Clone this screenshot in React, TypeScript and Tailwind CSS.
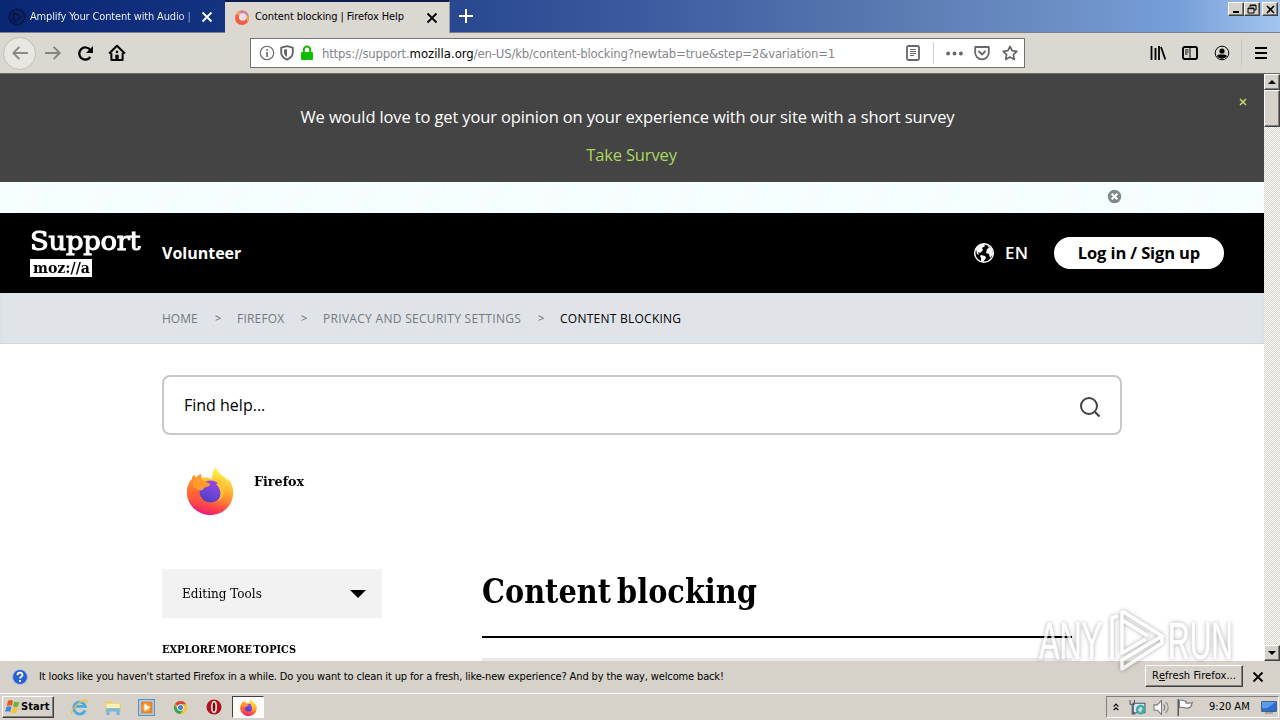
import type { ReactNode } from "react";

const ui = "font-['DejaVu_Sans_Condensed','DejaVu_Sans',sans-serif] [font-stretch:condensed]";
const slab = "font-['DejaVu_Serif_Condensed','DejaVu_Serif',serif] [font-stretch:condensed]";
const raised =
  "bg-[#d6d2ca] border border-t-white border-l-white border-r-[#404040] border-b-[#404040] shadow-[inset_-1px_-1px_0_#808080]";

function Svg({ size = 16, className = "", box = "0 0 16 16", children }: { size?: number; className?: string; box?: string; children: ReactNode }) {
  return (
    <svg width={size} height={size} viewBox={box} className={`shrink-0 ${className}`} fill="none">
      {children}
    </svg>
  );
}

function Cross({ className = "" }: { className?: string }) {
  return (
    <Svg size={12} box="0 0 12 12" className={className}>
      <path d="M1.5 1.5l9 9M10.5 1.5l-9 9" stroke="currentColor" strokeWidth="1.8" />
    </Svg>
  );
}

function FirefoxLogo({ size, className = "" }: { size: number; className?: string }) {
  return (
    <Svg size={size} box="0 0 48 48" className={className}>
      <defs>
        <linearGradient id="fxBody" x1="34" y1="4" x2="20" y2="48" gradientUnits="userSpaceOnUse">
          <stop offset="0" stopColor="#fff04a" />
          <stop offset=".35" stopColor="#ffb82e" />
          <stop offset=".62" stopColor="#ff7a35" />
          <stop offset=".82" stopColor="#ff3f4c" />
          <stop offset="1" stopColor="#e8207c" />
        </linearGradient>
        <linearGradient id="fxGlobe" x1="30" y1="13" x2="20" y2="34" gradientUnits="userSpaceOnUse">
          <stop offset="0" stopColor="#a544e0" />
          <stop offset=".5" stopColor="#7445de" />
          <stop offset="1" stopColor="#5540c0" />
        </linearGradient>
        <linearGradient id="fxSide" x1="4" y1="12" x2="14" y2="42" gradientUnits="userSpaceOnUse">
          <stop offset="0" stopColor="#ff9424" />
          <stop offset=".5" stopColor="#ff5f35" />
          <stop offset="1" stopColor="#ff4050" stopOpacity="0" />
        </linearGradient>
      </defs>
      <path d="M30 0c1 5 5 7 8 10 2 1 3 3 4 5 0-2-1-4-2-5 5 4 8 11 7 18-1 12-11 20-23 20S1 38 1 26c0-6 2-11 5-14 0-2 1-3 2-4l2 3c1-2 3-3 5-4v4c3-1 7-1 11 1 0-5 1-9 4-12z" fill="url(#fxBody)" />
      <path d="M6 12c0-2 1-3 2-4l2 3c1-2 3-3 5-4v5l-1 14c1 8 6 12 12 12-4 8-25 2-25-12 0-6 2-11 5-14z" fill="url(#fxSide)" />
      <circle cx="24.500" cy="24.500" r="11" fill="url(#fxGlobe)" />
      <path d="M25 12c4-1 8 1 10 5-2-1-4-1-5 0 5 5 6 12 2 17 7-4 9-14 3-20-3-3-7-3-10-2z" fill="#ffc136" />
      <path d="M7 14l4-3 4-2 1 4c3 2 6 2 8 4 1 2-4 3-6 4-1 2-3 3-6 2l-5-3z" fill="#ff9a2e" />
    </Svg>
  );
}

function Tabs() {
  return (
    <div className={`flex h-[33px] items-start border-b border-[#7d7f86] bg-[linear-gradient(90deg,#0a2774_0%,#12317f_16%,#27478f_35%,#3c5a9f_50%,#5877b0_68%,#6c8fc6_83%,#769fd9_92%,#a3c5ee_100%)] ${ui} text-[11px]`}>
      <div className="flex h-[33px] w-[225px] items-center pl-2 text-white">
        <Svg size={18}>
          <circle cx="8" cy="8" r="7" stroke="#06164a" strokeWidth="1.3" fill="#0b2263" />
          <path d="M5.5 4v8l6-4zM4 5v6" stroke="#06164a" />
        </Svg>
        <span className="ml-1 w-[163px] whitespace-nowrap bg-[linear-gradient(90deg,#fff_90%,#8ea0ca)] bg-clip-text pt-px tracking-[-0.16px] text-transparent">Amplify Your Content with Audio |</span>
        <Cross className="ml-2" />
      </div>
      <div className="flex h-[33px] w-[225px] shrink-0 items-center border-r border-t-2 border-r-[#9a9a9a] border-t-[#0b1c55] bg-[#dbd8d2] pl-[9px] text-black">
        <Svg>
          <circle cx="8" cy="8" r="7" fill="#f65a45" />
          <path d="M2 4a7 7 0 0 1 12-1c2 3 1 7-1 9 0-5-3-7-7-6z" fill="#f9a05a" />
          <path d="M5 1.7A7 7 0 0 1 14.8 8c-1-3-3-5-6-5z" fill="#9a7af0" />
          <circle cx="8.7" cy="7" r="3.8" fill="#e9ddec" />
        </Svg>
        <span className="ml-[5px] w-[171px] whitespace-nowrap tracking-[-0.1px]">Content blocking | Firefox Help</span>
        <Cross />
      </div>
      <Svg size={16} className="ml-[8px] mt-2">
        <path d="M8 1v14M1 8h14" stroke="white" strokeWidth="2" />
      </Svg>
      <div className="ml-auto mr-[2px] mt-[2px] flex">
        <div className={`flex h-[14px] w-4 items-end justify-center pb-[2px] ${raised}`}><div className="h-[2px] w-[6px] bg-black" /></div>
        <div className={`flex h-[14px] w-4 items-center justify-center ${raised}`}>
          <Svg size={10} box="0 0 10 10"><path d="M3 3V1h6v5H7M3 1.7h6M1 4h6v5H1zM1 4.7h6" stroke="black" /></Svg>
        </div>
        <div className={`ml-[2px] flex h-[14px] w-4 items-center justify-center ${raised}`}>
          <Svg size={9} box="0 0 9 9"><path d="M1 1l7 7M8 1L1 8" stroke="black" strokeWidth="1.6" /></Svg>
        </div>
      </div>
    </div>
  );
}

function NavBar() {
  return (
    <div className="flex h-[41px] items-center border-b border-[#6b6962] bg-[#dbd8d2]">
      <div className="ml-[3px] flex h-[33px] w-[33px] items-center justify-center rounded-full border border-[#c2bfb9] bg-[#e9e7e2]">
        <Svg size={18}><path d="M15 8H2M7.5 2.5L2 8l5.5 5.5" stroke="#8b8984" strokeWidth="1.7" /></Svg>
      </div>
      <Svg size={18} className="ml-[8px]"><path d="M1 8h13M8.500 2.500L14 8l-5.500 5.500" stroke="#85837e" strokeWidth="1.7" /></Svg>
      <Svg size={17} className="ml-[15px]">
        <path d="M12.500 11.300A5.700 5.700 0 1 1 12.400 4.600" stroke="black" strokeWidth="2.100" />
        <path d="M15 1v6.500H8.500z" fill="black" />
      </Svg>
      <Svg size={18} className="ml-[14px]">
        <path d="M1 8.500L8 1.600l7 6.900M3 8v6.300h10V8" stroke="black" strokeWidth="1.800" strokeLinejoin="round" />
        <path d="M6.500 14V9.500h3V14z" fill="black" /><path d="M7 6h2v2H7z" fill="black" />
      </Svg>
      <div className="ml-[124px] flex h-[30px] w-[775px] items-center border border-[#74736f] bg-white pl-[8px] text-[#66666a]">
        <Svg><circle cx="8" cy="8" r="6.700" stroke="currentColor" strokeWidth="1.100" /><path d="M8 7v5M8 4v1.700" stroke="currentColor" strokeWidth="1.600" /></Svg>
        <Svg className="ml-1"><path d="M8 1.200l5.800 1.400v4.900c0 3.500-3 6-5.800 7.200-2.800-1.200-5.800-3.700-5.800-7.200V2.600z" stroke="currentColor" strokeWidth="1.900" strokeLinejoin="round" /><path d="M8 4v8C6 10.500 5 9.500 5 7.500V4.700z" fill="currentColor" /></Svg>
        <Svg className="ml-1"><path d="M4.800 8V4.800a3.200 3.200 0 0 1 6.400 0V8" stroke="#12bc00" strokeWidth="2" /><rect x="2" y="7" width="12" height="8" rx="1" fill="#12bc00" /></Svg>
        <span className={`ml-[7px] w-[581px] whitespace-nowrap pt-px ${ui} text-[13px] font-extralight tracking-[-0.19px] text-[#85858a]`}>
          https://support.<span className="font-normal tracking-[-0.02px] text-black">mozilla.org</span>/en-US/kb/content-blocking?newtab=true&amp;step=2&amp;variation=1
        </span>
        <Svg className="ml-[2px]"><rect x="2" y="1" width="12" height="14" rx="1.500" stroke="currentColor" strokeWidth="1.800" /><path d="M5 4.500h6M5 6.500h6M5 8.500h6M5 10.500h4" stroke="currentColor" /></Svg>
        <div className="ml-[12px] h-[22px] w-px bg-[#d0d0d0]" />
        <Svg className="ml-3" size={17}><circle cx="2" cy="8" r="1.800" fill="currentColor" /><circle cx="8" cy="8" r="1.800" fill="currentColor" /><circle cx="14" cy="8" r="1.800" fill="currentColor" /></Svg>
        <Svg className="ml-[11px]"><path d="M1.200 2h13.600v5.500a6.800 6.800 0 0 1-13.600 0z" stroke="currentColor" strokeWidth="1.800" strokeLinejoin="round" /><path d="M4.500 6L8 9.400 11.500 6" stroke="currentColor" strokeWidth="1.800" /></Svg>
        <Svg className="ml-3"><path d="M8 1.300l2.100 4.400 4.700.6-3.400 3.300.9 4.800L8 12l-4.300 2.400.9-4.800L1.200 6.300l4.700-.6z" stroke="currentColor" strokeWidth="1.700" strokeLinejoin="round" /></Svg>
      </div>
      <Svg className="ml-[125px]"><path d="M1.500 1v14M5.500 3v12M9 1v14M11 2l4.300 12.500" stroke="black" strokeWidth="1.800" /></Svg>
      <Svg className="ml-4"><rect x="1" y="2" width="14" height="12" rx="1.700" stroke="black" strokeWidth="1.900" /><path d="M8 2v12M3 5h3.500M3 7h3.500M3 9h2.500" stroke="black" /></Svg>
      <Svg className="ml-4"><circle cx="8" cy="8" r="6.800" stroke="black" /><circle cx="8" cy="6" r="2.600" fill="black" /><path d="M3 11c1-2 2.500-1.500 5-1.500s4 0 5 1.500c-2.500 3.700-7.500 3.700-10 0z" fill="black" /></Svg>
      <div className="ml-[11px] h-7 w-px bg-[#c9c6c0]" />
      <Svg className="ml-[11px]"><path d="M2 3h12M2 8h12M2 13h12" stroke="black" strokeWidth="2" /></Svg>
    </div>
  );
}

function Globe() {
  return (
    <Svg size={22} box="0 0 22 22">
      <circle cx="11" cy="11" r="9.300" stroke="white" strokeWidth="1.500" />
      <path d="M3 7c2-3 4-5 8-5l1 2-3 2 1 2-3 3-2-1 1 3-2-1zM8 13l4 1 1 2-3 4-2-1v-3l-1-2zM14 3l5 4 1 5-3 4-1-4-3-1 1-4 2-1z" fill="white" />
    </Svg>
  );
}

function Crumbs() {
  const sep = <span className="w-[38px] pl-4 text-[11px] tracking-normal text-[#606468]">&gt;</span>;
  return (
    <div className="flex h-[51px] shrink-0 items-center whitespace-nowrap border-b border-[#d3d8de] bg-[linear-gradient(90deg,#dbe0e5,#e0e4e8_4px,#e0e4e8_1260px,#dbe0e5)] pl-[162px] pt-px font-['Open_Sans',sans-serif] text-[12px] text-[#75797d]">
      <span className="w-[37px]">HOME</span>{sep}
      <span className="w-12 tracking-[0.2px]">FIREFOX</span>{sep}
      <span className="w-[199px] tracking-[0.3px]">PRIVACY AND SECURITY SETTINGS</span>{sep}
      <span className="tracking-[0.25px] text-black">CONTENT BLOCKING</span>
    </div>
  );
}

function Page() {
  return (
    <div className="flex min-w-0 flex-1 flex-col overflow-hidden bg-white">
      <div className="flex h-[108px] shrink-0 justify-between bg-[#444] font-['Open_Sans','Noto_Sans',sans-serif] text-[16.5px] leading-6 text-white">
        <div className="w-4" />
        <div className="flex flex-col items-center pt-[31px]">
          <div className="whitespace-nowrap tracking-[-0.13px]">We would love to get your opinion on your experience with our site with a short survey</div>
          <div className="ml-2 mt-[14px] tracking-[-0.15px] text-[#aed660]">Take Survey</div>
        </div>
        <Svg size={8} box="0 0 8 8" className="mr-[17px] mt-6"><path d="M1 1l6 6M7 1L1 7" stroke="#c7db6b" strokeWidth="1.500" /></Svg>
      </div>
      <div className="flex h-[31px] shrink-0 items-start justify-end bg-[repeating-linear-gradient(120deg,#f4ffff_0_28px,#f7fdfe_28px_46px,#f3fffc_46px_56px)] pr-[142px] pt-[7px]">
        <Svg size={15}><circle cx="8" cy="8" r="7.200" fill="#81898c" /><path d="M5 5l6 6M11 5l-6 6" stroke="white" strokeWidth="2.200" /></Svg>
      </div>
      <div className="flex h-20 shrink-0 items-center bg-black pl-[30px] pr-10 font-['Open_Sans',sans-serif] text-[17px] font-semibold text-white">
        <div className={`flex h-12 w-[132px] flex-col ${slab}`}>
          <div className="h-[30px] w-[112px] origin-left scale-x-[1.17] text-[26px] font-medium leading-[24px] tracking-[-0.2px] [-webkit-text-stroke:1px_white]">Support</div>
          <div className="flex h-[18px] w-[62px] items-center justify-center bg-white text-[14px] font-bold leading-[15px] text-black"><span className="scale-x-[1.12]">moz://a</span></div>
        </div>
        <span className="text-[16px] font-bold">Volunteer</span>
        <div className="ml-auto"><Globe /></div>
        <span className="ml-[10px] w-[49px] tracking-[0.3px]">EN</span>
        <div className="flex h-8 w-[170px] items-center justify-center rounded-full bg-white text-[16.500px] font-bold tracking-[-0.120px] text-black">Log in / Sign up</div>
      </div>
      <Crumbs />
      <div className="ml-[162px] mt-[31px] flex h-[60px] w-[960px] shrink-0 items-center justify-between rounded-lg border-2 border-[#c8c8c8] pl-5 pr-[18px] font-['Open_Sans',sans-serif] text-[16px] text-black">
        <span>Find help...</span>
        <Svg size={24} box="0 0 24 24" className="mt-1"><circle cx="11" cy="11" r="8" stroke="#444" strokeWidth="2" /><path d="M17 17l4.500 4.500" stroke="#444" strokeWidth="2.300" /></Svg>
      </div>
      <div className={`ml-[186px] mt-[32px] flex h-[49px] shrink-0 ${slab} text-[12.5px] font-bold`}>
        <FirefoxLogo size={48} />
        <span className="ml-[20px] mt-[5px] origin-left scale-x-[1.13] leading-5">Firefox</span>
      </div>
      <div className="ml-[162px] mt-[53px] flex">
        <div className={`w-80 ${slab}`}>
          <div className="flex h-[49px] w-[220px] items-center justify-between bg-[#f2f2f2] pl-5 pr-4 text-[13px]">
            <span className="origin-left scale-x-[1.03] whitespace-nowrap">Editing Tools</span>
            <div className="h-0 w-0 border-x-8 border-t-8 border-x-transparent border-t-black" />
          </div>
          <div className="mt-6 w-fit origin-left scale-x-[.99] whitespace-nowrap text-[11px] font-bold leading-4 [word-spacing:-2px]">EXPLORE MORE TOPICS</div>
        </div>
        <div className={`w-[590px] ${slab}`}>
          <div className="flex h-[69px] items-start border-b-2 border-black pt-px"><h1 className="origin-left scale-x-[.97] whitespace-nowrap text-[33px] font-bold leading-[44px] [word-spacing:-4px]">Content blocking</h1></div>
          <div className="mt-5 h-5 bg-[#e9e9e9]" />
        </div>
      </div>
    </div>
  );
}

function ScrollBar() {
  return (
    <div className="flex w-4 shrink-0 flex-col bg-[repeating-conic-gradient(#d6d2ca_0_25%,#fff_0_50%)] bg-[length:2px_2px]">
      <div className={`flex h-4 items-center justify-center ${raised}`}><div className="border-x-4 border-b-4 border-x-transparent border-b-black" /></div>
      <div className={`h-[37px] ${raised}`} />
      <div className={`mt-auto flex h-4 items-center justify-center ${raised}`}><div className="border-x-4 border-t-4 border-x-transparent border-t-black" /></div>
    </div>
  );
}

function Notice() {
  return (
    <div className={`flex h-8 shrink-0 items-center bg-[#d6d2ca] pl-3 pr-4 ${ui} text-[11px]`}>
      <Svg><circle cx="8" cy="8" r="7.500" fill="#2860cf" stroke="#a9bfeb" /><path d="M5.500 6.200c0-3.400 5-3.200 5-.3 0 1.800-2.500 1.800-2.500 3.600M8 11v2" stroke="white" strokeWidth="1.800" /></Svg>
      <span className="ml-[11px] whitespace-nowrap pt-px tracking-[-0.14px]">It looks like you haven't started Firefox in a while. Do you want to clean it up for a fresh, like-new experience? And by the way, welcome back!</span>
      <div className={`ml-auto mb-[2px] flex h-[22px] w-[98px] items-center justify-center whitespace-nowrap pt-px tracking-[0.06px] ${raised}`}>R<u>e</u>fresh Firefox...</div>
      <Cross className="ml-[9px]" />
    </div>
  );
}

function TaskBar() {
  return (
    <div className={`flex h-[27px] shrink-0 items-center border-t border-white bg-[#d6d2ca] pl-[2px] pr-[1px] ${ui} text-[11px]`}>
      <div className={`flex h-[22px] w-[52px] items-center pl-[2px] font-bold ${raised}`}>
        <Svg>
          <path d="M3 2c2-1.500 3.500-1 5 0L6.800 7c-1.500-1-3-1.200-5 0z" fill="#e95925" />
          <path d="M9 2.500c2 1 3.500 1 5.500 0L13 7.500c-2 1-3.500 1-5 0z" fill="#72b13a" />
          <path d="M1.500 8c2-1.200 3.500-1 5 0l-1.300 5c-1.500-1-3-1-5 0z" fill="#3e87d6" />
          <path d="M7.700 8.500c1.500 1 3.500 1 5 0l-1.300 5c-1.800 1-3.500 1-5 0z" fill="#f8c32c" />
        </Svg>
        <span className="pt-px tracking-[0.1px]">Start</span>
      </div>
      <Svg size={18} className="ml-4">
        <path d="M13.500 11a5.300 5.300 0 1 1 .2-3.500H4" stroke="#4ba9e2" strokeWidth="2.500" />
        <path d="M1.500 14.500c-1.500-4 8-13 13-12.500 1 .5.500 2-.5 3" stroke="#eac14a" strokeWidth="1.200" />
      </Svg>
      <Svg size={18} className="ml-4">
        <path d="M1 3h6l1 1.500h7V12H1z" fill="#e9cb69" /><path d="M2 5h12v4H2z" fill="#fbf0b5" /><path d="M2 9h12v6h-3v-3H5v3H2z" fill="#77b7e2" />
      </Svg>
      <Svg size={17} className="ml-4">
        <rect x=".500" y=".500" width="15" height="15" fill="#a9cfee" stroke="#5995c4" /><rect x="3" y="2.500" width="10.500" height="11" fill="#f07c1c" /><circle cx="8" cy="8" r="4.300" fill="#f99b3b" /><path d="M6 4.500l5.500 3.500L6 11.500z" fill="white" />
      </Svg>
      <Svg className="ml-[18px]" size={15}>
        <circle cx="8" cy="8" r="7" fill="#f3c52e" /><path d="M8 8L1.900 4.500A7 7 0 0 1 14.100 4.500H8z" fill="#db4437" /><path d="M1.900 4.500A7 7 0 0 0 8 15l3-5.200H5z" fill="#3ea55b" /><circle cx="8" cy="8" r="3.500" fill="white" /><circle cx="8" cy="8" r="2.700" fill="#4285d4" />
      </Svg>
      <Svg className="ml-[18px]">
        <circle cx="8" cy="8" r="7.500" fill="#b30f18" /><ellipse cx="8" cy="8" rx="2.200" ry="5.300" stroke="#f0dede" strokeWidth="1.700" fill="#760b0f" />
      </Svg>
      <div className="ml-[10px] flex h-[22px] w-8 items-center justify-center border border-b-white border-l-[#404040] border-r-white border-t-[#404040] bg-[#fbfaf8]">
        <FirefoxLogo size={17} />
      </div>
      <div className="ml-auto flex h-[22px] w-[173px] items-center border border-b-white border-l-[#808080] border-r-white border-t-[#808080] pl-[5px]">
        <Svg size={8} box="0 0 8 10"><path d="M1 4.500l3-3 3 3M1 9l3-3 3 3" stroke="black" strokeWidth="1.500" /></Svg>
        <Svg size={17} className="ml-[9px]"><path d="M4 4h11v9H4z" fill="#d5e9f5" stroke="#456" /><circle cx="11" cy="10" r="4.500" fill="#3fa7a6" /><path d="M8 10l3-3 2 2-2 4z" fill="#b6e3cc" /><path d="M1 1v4h4V1M3 5v9h3" stroke="#555" /></Svg>
        <Svg size={17} className="ml-[7px]"><path d="M1 5.500h3l4-4v13l-4-4H1z" fill="white" stroke="#777" /><path d="M10 5c1.500 2 1.500 4 0 6M12 3c3 3 3 7 0 10" stroke="#777" /></Svg>
        <Svg size={18} className="ml-[6px]"><path d="M2 1v15" stroke="#555" strokeWidth="1.300" /><path d="M3 2c3-1 4 1 6 1v1.500c2 0 3 .5 5.500-.5-1 4-2 5-5 5-2 0-3-1.500-6.500-.5z" fill="white" stroke="#777" /></Svg>
        <span className="ml-[15px] whitespace-nowrap pt-px">9:20 AM</span>
        <Svg size={16} className="ml-auto mr-[1px]"><rect x=".500" y="2.500" width="15" height="10" rx=".500" fill="#2c6fd2" stroke="#4b607c" /><path d="M1 3h14l-9 6H1z" fill="#5b9ceb" /><path d="M4 14h8" stroke="#777" /></Svg>
      </div>
    </div>
  );
}

function Watermark() {
  return (
    <svg className="pointer-events-none absolute left-[1030px] top-[600px] overflow-visible opacity-75 drop-shadow-[0_0_2px_rgba(0,0,0,.45)]" width="240" height="80" viewBox="0 0 240 80" fill="none" stroke="white">
      <g fontFamily="Liberation Sans Narrow, Liberation Sans, sans-serif" fontSize="52" strokeWidth=".5" fill="white">
        <text x="9" y="59" textLength="63" lengthAdjust="spacingAndGlyphs">ANY</text>
        <text x="138" y="59" textLength="65" lengthAdjust="spacingAndGlyphs">RUN</text>
      </g>
      <path d="M82 60V18l6-2M92 11v42l24-14M92 11l40 25-40 24v9l40-26v-7M92 20l26 16" strokeWidth="3.500" strokeLinejoin="round" />
    </svg>
  );
}

export default function App() {
  return (
    <div className="relative flex h-[720px] w-[1280px] flex-col overflow-hidden bg-white text-black">
      <Tabs />
      <NavBar />
      <div className="flex min-h-0 flex-1">
        <Page />
        <ScrollBar />
      </div>
      <Notice />
      <TaskBar />
      <Watermark />
    </div>
  );
}
